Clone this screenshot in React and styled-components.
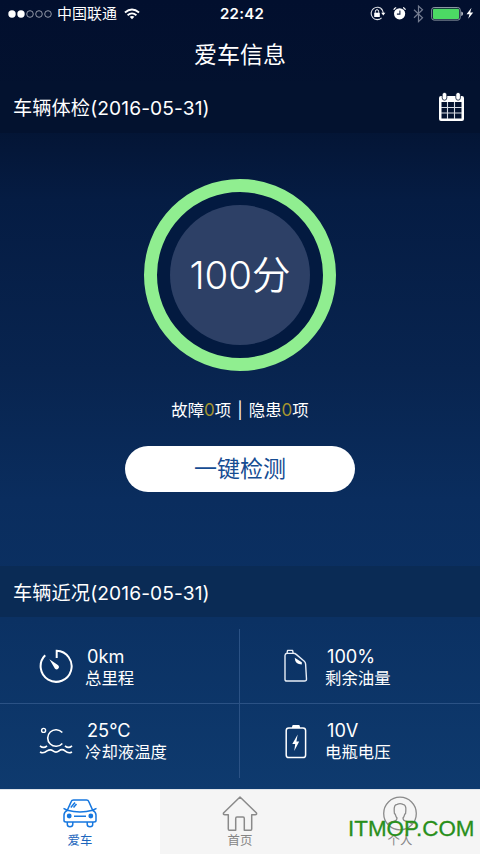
import React from 'react';
import styled, { createGlobalStyle } from 'styled-components';

const Global = createGlobalStyle`
  * { box-sizing: border-box; }
  body { margin: 0; }
`;

const Screen = styled.div`
  width: 480px;
  height: 854px;
  overflow: hidden;
  display: flex;
  flex-direction: column;
  color: #fff;
  font-family: Inter, 'Noto Sans CJK SC', sans-serif;
  background: linear-gradient(180deg, #020f2e 0, #03122f 100px, #051c43 200px, #08244f 370px, #0a2d5e 500px, #0b3163 620px, #0e3a6e 789px);
`;

const StatusBar = styled.header`
  height: 27px;
  flex: none;
  display: grid;
  grid-template-columns: 1fr auto 1fr;
  align-items: center;
  padding: 0 5px 0 8px;
`;

const Carrier = styled.div`
  display: flex;
  align-items: center;
  font-size: 15px;
  line-height: 20px;
  svg { flex: none; }
`;

const CarrierName = styled.span`
  margin: 0 7px 0 5px;
`;

const Clock = styled.time`
  font-size: 15px;
  font-weight: 600;
  letter-spacing: 0.25px;
  margin-left: 1px;
`;

const Indicators = styled.div`
  display: flex;
  justify-content: flex-end;
  align-items: center;
`;

const Title = styled.h1`
  margin: 0;
  height: 54px;
  flex: none;
  text-align: center;
  font-size: 23px;
  line-height: 56px;
  font-weight: 400;
`;

const SectionBar = styled.div`
  flex: none;
  height: ${(p) => p.$height}px;
  padding: 0 15px 0 13px;
  display: flex;
  align-items: center;
  justify-content: space-between;
  background: ${(p) => p.$fill};
`;

const SectionTitle = styled.h2`
  margin: 0;
  padding-top: 2px;
  font-size: 19.2px;
  line-height: 28px;
  font-weight: 380;
  letter-spacing: 0.1px;
  white-space: nowrap;
`;

const Inspection = styled.main`
  flex: none;
  height: 433px;
  display: flex;
  flex-direction: column;
  align-items: center;
  padding-top: 46px;
`;

const ScoreRing = styled.div`
  width: 192px;
  height: 192px;
  border: 13px solid #90ee90;
  border-radius: 50%;
  padding: 13px;
  background: #031a40;
`;

const Score = styled.div`
  height: 100%;
  border-radius: 50%;
  background: #2d4066;
  display: flex;
  align-items: center;
  justify-content: center;
  padding-bottom: 6px;
  font-size: 38.5px;
  font-weight: 340;
  white-space: nowrap;
`;

const Faults = styled.p`
  margin: 27px 0 0;
  font-size: 16.4px;
  line-height: 24px;
  white-space: pre;
`;

const Separator = styled.span`
  margin: 0 1.5px;
`;

const Count = styled.span`
  color: #a5942f;
  font-size: 17px;
`;

const CheckButton = styled.button`
  margin-top: 24px;
  width: 230px;
  height: 46px;
  border: 0;
  border-radius: 23px;
  padding: 0;
  background: #fff;
  color: #164c92;
  font: 400 23px/46px Inter, 'Noto Sans CJK SC', sans-serif;
`;

const Metrics = styled.section`
  flex: none;
  height: 172px;
  display: grid;
  grid-template-columns: 240px 240px;
  grid-template-rows: 87px 85px;
`;

const Metric = styled.div`
  display: flex;
  padding: ${(p) => (p.$lower ? '15px 0 0 36px' : '27px 0 0 36px')};
  border-bottom: ${(p) => (p.$lower ? 'none' : '1px solid #2b5285')};
  background: linear-gradient(#2b5285, #2b5285) right ${(p) => (p.$lower ? 'top' : 'bottom')} / ${(p) => (p.$divided ? '1px' : '0')} 74px no-repeat;
`;

const MetricIcon = styled.div`
  width: 40px;
  height: 44px;
  flex: none;
  display: grid;
  place-items: center;
`;

const MetricText = styled.div`
  margin-top: ${(p) => (p.$lower ? '-1px' : '0')};
  margin-left: 9px;
`;

const Value = styled.div`
  font-size: 18.2px;
  line-height: 24px;
  padding-left: 2px;
`;

const Label = styled.div`
  font-size: 16.4px;
  line-height: 21px;
`;

const TabBar = styled.nav`
  flex: none;
  height: 65px;
  display: grid;
  grid-template-columns: repeat(3, 160px);
  background: #f5f5f5;
  border-top: 1px solid #dfe4ea;
  position: relative;
`;

const Tab = styled.a`
  display: flex;
  flex-direction: column;
  align-items: center;
  padding-top: 6px;
  font-size: 12.4px;
  line-height: 16px;
  color: ${(p) => (p.$active ? '#1d66bd' : '#858585')};
  background: ${(p) => (p.$active ? '#fff' : 'transparent')};
  svg { flex: none; margin-bottom: 1px; }
`;

const Watermark = styled.span`
  position: absolute;
  left: 348px;
  top: 25px;
  font: 400 22.4px/28px 'Liberation Sans', sans-serif;
  color: #298f1b;
  -webkit-text-stroke: 0.3px #298f1b;
  white-space: nowrap;
`;

const Signal = () => (
  <svg width="44" height="10" viewBox="0 0 44 10">
    {[4, 13, 22, 31, 40].map((x, i) => (
      <circle key={x} cx={x} cy="5" r={i < 2 ? 3.7 : 3.3} fill={i < 2 ? '#fff' : 'none'} stroke={i < 2 ? 'none' : '#b6bac5'} strokeWidth=".8" />
    ))}
  </svg>
);

const Wifi = () => (
  <svg width="16" height="12" viewBox="0 0 17 12" fill="none" stroke="#fff" strokeWidth="2">
    <path d="M1 4.4Q8.5-2 16 4.4M3.8 7.3Q8.5 3.4 13.2 7.3" />
    <path d="M8.5 11.6 6 9Q8.5 7.2 11 9Z" fill="#fff" stroke="none" />
  </svg>
);

const StatusIcons = () => (
  <svg width="106" height="24" viewBox="369 1.5 106 24" fill="none">
    <path d="M382.3 9.2A6.2 6.2 0 1 0 381.6 17.4M380.8 8A6.2 6.2 0 0 1 383.3 12.5" stroke="#dfe1e6" strokeWidth="1.1" />
    <path d="M381.2 12.2h4.2l-2.1 2.8z" fill="#fff" />
    <rect x="374.2" y="12.2" width="5.6" height="4.3" fill="#fff" />
    <path d="M375.4 12.2v-1.4a1.6 1.6 0 0 1 3.2 0v1.4" stroke="#fff" />
    <circle cx="399.6" cy="13.3" r="5.6" fill="#fff" />
    <path d="M399.9 10v3.6h-3" stroke="#142242" strokeWidth="1.1" />
    <path d="M393.8 9.4q.4-1.8 2.4-2.2M405.4 9.4q-.4-1.8-2.4-2.2" stroke="#fff" strokeWidth="1.2" />
    <path d="M414 9.3l8.5 8-4 3.8V5.6l4 3.7-8.5 8" stroke="#747c90" strokeWidth="1.2" />
    <rect x="431.7" y="7" width="28.5" height="12.6" rx="2.4" stroke="#8c95a2" />
    <rect x="433" y="8.2" width="26" height="10.2" rx="1" fill="#4cd964" />
    <path d="M461.3 11q1.7.3 1.7 2.3t-1.7 2.3z" fill="#c9ccd3" />
    <path d="M471.5 7.2l-5 6.6h3l-1.3 4.5 5-6.4h-3z" fill="#fff" />
  </svg>
);

const Calendar = () => (
  <svg width="27" height="30" viewBox="0 0 27 30">
    <path fillRule="evenodd" fill="#fff" d="M3 4H24Q26 4 26 6V27Q26 29 24 29H3Q1 29 1 27V6Q1 4 3 4ZM3.5 10V26.5H23.5V10Z" />
    <path d="M9.5 10v17M16.5 10v17M3 15.5h21M3 21h21" stroke="#d9dde5" strokeWidth="1.1" />
    <rect x="4.2" y=".4" width="4.6" height="7.8" rx="2.3" fill="#fff" stroke="#04132f" strokeWidth=".8" />
    <rect x="17.8" y=".4" width="4.6" height="7.8" rx="2.3" fill="#fff" stroke="#04132f" strokeWidth=".8" />
  </svg>
);

const Gauge = () => (
  <svg width="36" height="36" viewBox="0 0 36 36" fill="none" stroke="#fff" strokeWidth="2">
    <path d="M18.7 10V2.8A15.5 15.5 0 1 1 7.2 7.3" />
    <path d="M11.4 11.3 20.2 17.2A2.3 2.3 0 0 1 17 20.7Z" fill="#fff" stroke="none" />
  </svg>
);

const Coolant = () => (
  <svg width="34" height="30" viewBox="0 0 34 30" fill="none" stroke="#fff" strokeWidth="1.6">
    <circle cx="4.6" cy="4.4" r="2" strokeWidth="1.4" />
    <path d="M23.3 6.6A8.3 8.3 0 1 0 23.3 17.4" />
    <path d="M1 19.8q3.5 3.2 7 0M26 19.8q3.5 3.2 7 0M1 26q3.5 2 7-1.1 3.5-2 6 0 3 2.5 6 0 3-2.5 6 0 3.5 3.1 7 1.1" />
  </svg>
);

const Fuel = () => (
  <svg width="24" height="34" viewBox="0 0 24 34" fill="none" stroke="#e8eef7" strokeWidth="1.4" strokeLinejoin="round">
    <path d="M1 30.5V6.5Q1 4.5 3 4.2L3.6 1.4H8.6L9.2 4.3Q11 4.3 12.5 5.6L20.3 12.2Q21.5 13.2 21.6 15L22.5 30Q22.6 32 20.5 32H2.7Q1 32 1 30.5ZM3.2 4.4h6" />
    <path d="M10.7 8.8 17.8 13.2V15.6Q11 15.5 10.7 8.8Z" fill="#fff" stroke="none" />
  </svg>
);

const Battery = () => (
  <svg width="22" height="35" viewBox="0 0 22 35" fill="none" stroke="#fff" strokeWidth="1.5">
    <rect x="1.2" y="4" width="19.4" height="29.6" rx="2.6" />
    <path d="M7.5 2h7M7 3.2h8" strokeWidth="1.8" />
    <path d="M12.7 10.5 7.3 20H10.2L9.2 27 14.2 17.6H11.4Z" fill="#fff" stroke="none" />
  </svg>
);

const Car = () => (
  <svg width="36" height="36" viewBox="0 0 36 36" fill="none" stroke="#1677df" strokeWidth="1.5" strokeLinejoin="round">
    <path d="M5.3 14.3 9.2 5.6Q9.8 4 11.5 4H24.5Q26.2 4 26.8 5.6L30.7 14.3M5.3 14.3Q2 16 2 19V24.5Q2 26 4 26H32Q34 26 34 24.5V19Q34 16 30.7 14.3Q18 17.7 5.3 14.3ZM4.8 14 1.5 12.3M31.2 14 34.5 12.3" />
    <path d="M5.3 26V28.2Q5.3 30.7 8 30.7T10.8 28.2V26M25.2 26V28.2Q25.2 30.7 28 30.7T30.7 28.2V26M12 20.3h12M8.8 11.5l4.2-5M11.5 11.5 14.5 8" />
    <circle cx="7.2" cy="20" r="1.7" fill="#1677df" /><circle cx="28.8" cy="20" r="1.7" fill="#1677df" />
  </svg>
);

const Home = () => (
  <svg width="36" height="36" viewBox="0 0 36 36" fill="none" stroke="#8a8a8a" strokeWidth="1.5" strokeLinejoin="round">
    <path d="M18 1 1.5 17Q1 18.7 2.8 18.7H6.3V33Q6.3 34.3 7.3 34.3H13.7V22.5Q13.7 21 15 21H21Q22.3 21 22.3 22.5V34.3H28.7Q29.7 34.3 29.7 33V18.7H33.2Q35 18.7 34.5 17Z" />
  </svg>
);

const Person = () => (
  <svg width="36" height="36" viewBox="0 0 36 36" fill="none" stroke="#8a8a8a" strokeWidth="1.3" strokeLinejoin="round">
    <circle cx="18" cy="17.5" r="16.3" />
    <path d="M5.5 28.5Q7 26.5 12.2 25.2Q15 24.5 15 22Q13.8 20.5 13.3 18.3Q12 17.7 12.2 15Q11.8 8.5 15.2 8.3Q18 7 21 8.3Q24.5 9 23.8 15Q24 17.7 22.7 18.3Q22.2 20.5 21 22Q21 24.5 23.8 25.2Q29 26.5 30.5 28.5" />
  </svg>
);

const metrics = [
  { icon: Gauge, value: '0km', label: '总里程' },
  { icon: Fuel, value: '100%', label: '剩余油量' },
  { icon: Coolant, value: '25°C', label: '冷却液温度' },
  { icon: Battery, value: '10V', label: '电瓶电压' },
];

const tabs = [
  { icon: Car, name: '爱车' },
  { icon: Home, name: '首页' },
  { icon: Person, name: '个人' },
];

export default function App() {
  return (
    <>
      <Global />
      <Screen>
        <StatusBar>
          <Carrier><Signal /><CarrierName>中国联通</CarrierName><Wifi /></Carrier>
          <Clock>22:42</Clock>
          <Indicators><StatusIcons /></Indicators>
        </StatusBar>
        <Title>爱车信息</Title>
        <SectionBar $height={52} $fill="#03122f">
          <SectionTitle>车辆体检(2016-05-31)</SectionTitle>
          <Calendar />
        </SectionBar>
        <Inspection>
          <ScoreRing><Score>100分</Score></ScoreRing>
          <Faults>故障<Count>0</Count>项<Separator> | </Separator>隐患<Count>0</Count>项</Faults>
          <CheckButton>一键检测</CheckButton>
        </Inspection>
        <SectionBar $height={51} $fill="#0a2b55">
          <SectionTitle>车辆近况(2016-05-31)</SectionTitle>
        </SectionBar>
        <Metrics>
          {metrics.map(({ icon: Icon, value, label }, i) => (
            <Metric key={label} $lower={i > 1} $divided={i % 2 === 0}>
              <MetricIcon><Icon /></MetricIcon>
              <MetricText $lower={i > 1}><Value>{value}</Value><Label>{label}</Label></MetricText>
            </Metric>
          ))}
        </Metrics>
        <TabBar>
          {tabs.map(({ icon: Icon, name }, i) => (
            <Tab key={name} $active={i === 0}><Icon />{name}</Tab>
          ))}
          <Watermark>ITMOP.COM</Watermark>
        </TabBar>
      </Screen>
    </>
  );
}
